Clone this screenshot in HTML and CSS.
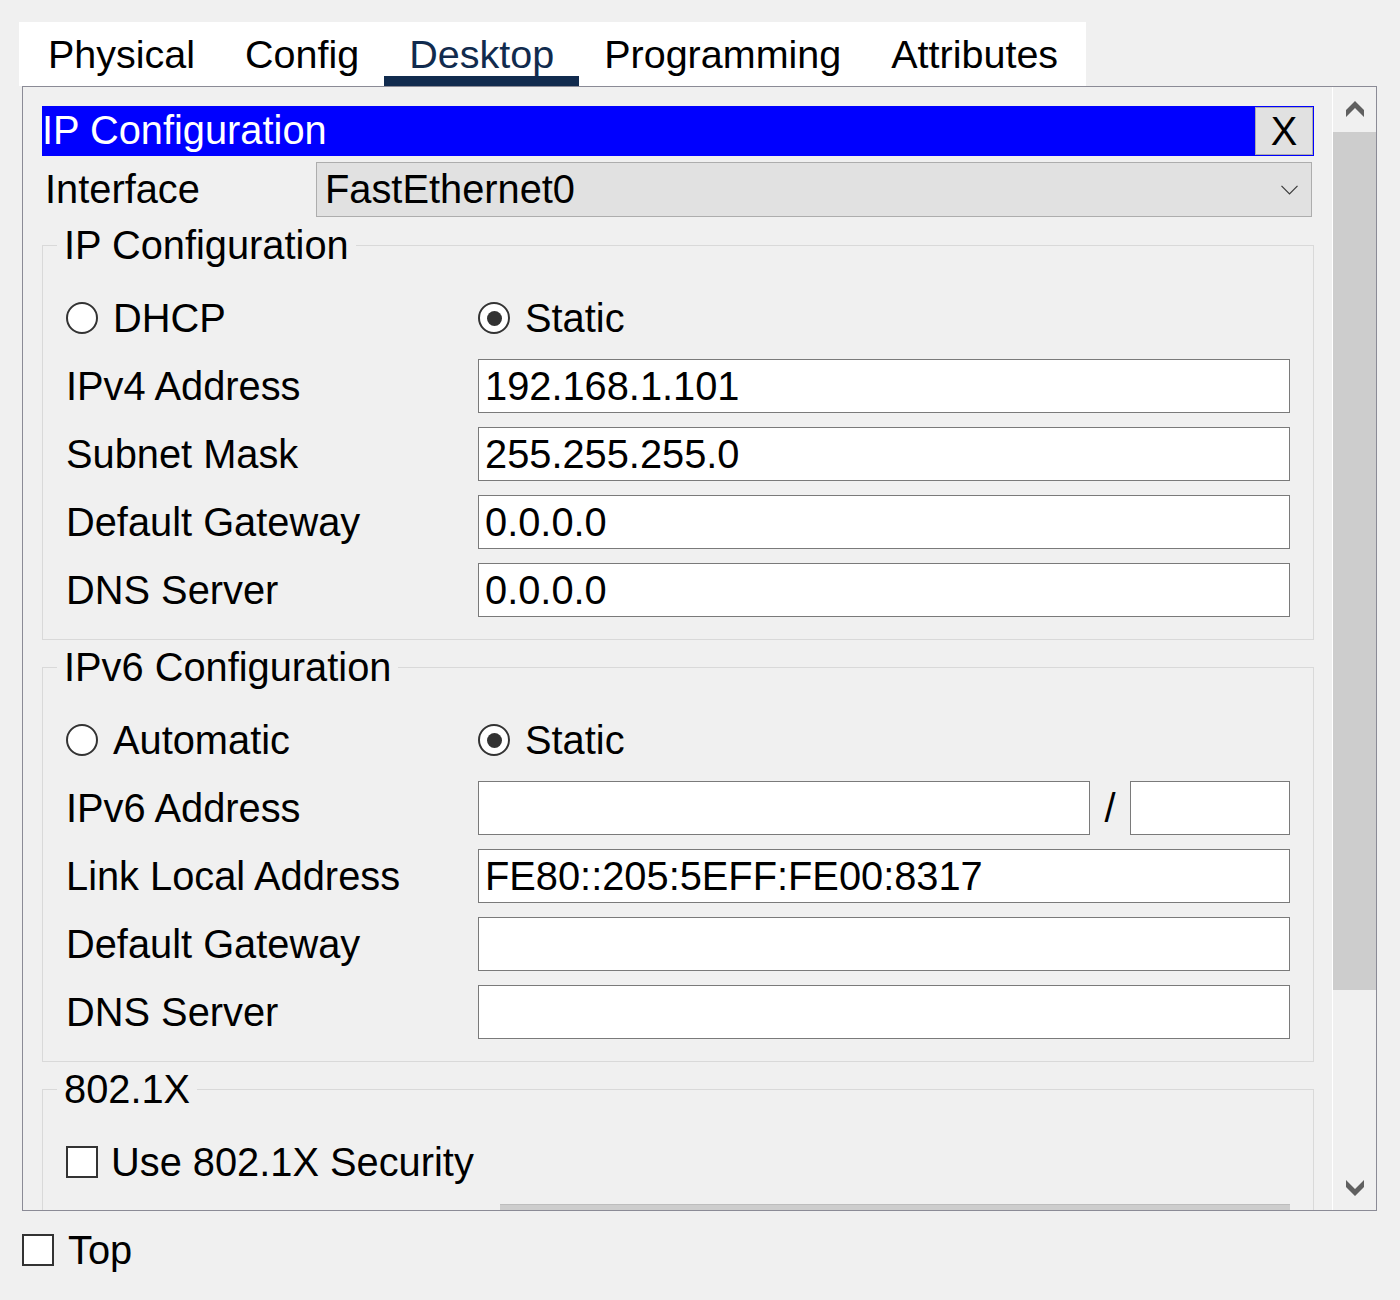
FILE: index.html
```html
<!DOCTYPE html>
<html>
<head>
<meta charset="utf-8">
<link rel="stylesheet" href="styles.css">
</head>
<body>
<div class="tabs">
  <div class="tab">Physical</div>
  <div class="tab">Config</div>
  <div class="tab active">Desktop</div>
  <div class="tab">Programming</div>
  <div class="tab">Attributes</div>
</div>
<div class="panel">
  <div class="scroll">
    <div class="content">
      <div class="titlebar">
        <span class="title">IP Configuration</span>
        <span class="close">X</span>
      </div>
      <div class="iface-row">
        <span class="iface-label">Interface</span>
        <div class="select">
          <span>FastEthernet0</span>
          <svg class="chev" width="17" height="10" viewBox="0 0 17 10"><polyline points="0.5,0.8 8.5,8.8 16.5,0.8" fill="none" stroke="#3a3a3a" stroke-width="1.2"/></svg>
        </div>
      </div>

      <fieldset class="group">
        <legend>IP Configuration</legend>
        <div class="row">
          <div class="col-label"><span class="radio"></span><span>DHCP</span></div>
          <div class="opt"><span class="radio checked"></span><span>Static</span></div>
        </div>
        <div class="row"><span class="col-label">IPv4 Address</span><input class="field" type="text" value="192.168.1.101"></div>
        <div class="row"><span class="col-label">Subnet Mask</span><input class="field" type="text" value="255.255.255.0"></div>
        <div class="row"><span class="col-label">Default Gateway</span><input class="field" type="text" value="0.0.0.0"></div>
        <div class="row"><span class="col-label">DNS Server</span><input class="field" type="text" value="0.0.0.0"></div>
      </fieldset>

      <fieldset class="group">
        <legend>IPv6 Configuration</legend>
        <div class="row">
          <div class="col-label"><span class="radio"></span><span>Automatic</span></div>
          <div class="opt"><span class="radio checked"></span><span>Static</span></div>
        </div>
        <div class="row">
          <span class="col-label">IPv6 Address</span>
          <input class="field addr" type="text" value="">
          <span class="slash">/</span>
          <input class="field prefix" type="text" value="">
        </div>
        <div class="row"><span class="col-label">Link Local Address</span><input class="field" type="text" value="FE80::205:5EFF:FE00:8317"></div>
        <div class="row"><span class="col-label">Default Gateway</span><input class="field" type="text" value=""></div>
        <div class="row"><span class="col-label">DNS Server</span><input class="field" type="text" value=""></div>
      </fieldset>

      <fieldset class="group last">
        <legend>802.1X</legend>
        <div class="row">
          <div class="col-label"><span class="check"></span><span>Use 802.1X Security</span></div>
        </div>
      </fieldset>
    </div>
    <div class="hthumb"></div>
  </div>
  <div class="vbar">
    <div class="arrow">
      <svg width="18" height="16" viewBox="0 0 18 16"><polygon points="9,0 18,9 18,16 9,7 0,16 0,9" fill="#606060"/></svg>
    </div>
    <div class="vthumb"></div>
    <div class="vspace"></div>
    <div class="arrow">
      <svg width="18" height="16" viewBox="0 0 18 16"><polygon points="0,0 9,9 18,0 18,7 9,16 0,7" fill="#606060"/></svg>
    </div>
  </div>
</div>
<div class="top-row"><span class="check"></span><span>Top</span></div>
</body>
</html>
```

FILE: styles.css
```css
body {
  margin: 0;
  background: #f0f0f0;
  font-family: "Liberation Sans", Arial, sans-serif;
  font-size: 39.8px;
  color: #000;
}

.tabs {
  display: flex;
  box-sizing: border-box;
  width: 1067px;
  height: 64px;
  margin: 22px 0 0 19px;
  padding-left: 4px;
  background: #fff;
  font-size: 39.5px;
}

.tab {
  padding: 10px 25px 0;
  line-height: 44px;
  border-bottom: 10px solid transparent;
  white-space: nowrap;
}

.tab.active {
  color: #112b4e;
  border-bottom-color: #112b4e;
}

.panel {
  display: flex;
  box-sizing: border-box;
  width: 1355px;
  height: 1125px;
  margin-left: 22px;
  border: 1px solid #8b8b96;
}

.scroll {
  position: relative;
  flex: 1;
  overflow: hidden;
}

.content {
  padding: 19px 18px 0 19px;
}

.titlebar {
  display: flex;
  justify-content: space-between;
  height: 50px;
  background: #0000ff;
  color: #fff;
  line-height: 49px;
}

.close {
  box-sizing: border-box;
  width: 58px;
  margin: 1px 1px 1px 0;
  background: #e1e1e1;
  border: 1px solid #adadad;
  color: #000;
  text-align: center;
  line-height: 46px;
}

.iface-row {
  display: flex;
  align-items: center;
  margin-top: 6px;
  padding-right: 2px;
}

.iface-label {
  width: 271px;
  padding-left: 3px;
  flex: none;
}

.select {
  flex: 1;
  display: flex;
  align-items: center;
  justify-content: space-between;
  box-sizing: border-box;
  height: 55px;
  padding: 0 13px 0 8px;
  background: #e1e1e1;
  border: 1px solid #adadad;
}

.chev {
  display: block;
}

.group {
  margin: 7px 0 0;
  padding: 24px 23px 22px 24px;
  border: 1px solid #d9d9d9;
  min-width: 0;
}

.group + .group {
  margin-top: 6px;
}

.group legend {
  margin-left: -10px;
  padding: 0 7px;
  line-height: 43px;
}

.group.last {
  padding-bottom: 80px;
}

.row {
  display: flex;
  align-items: center;
  height: 54px;
}

.row + .row {
  margin-top: 14px;
}

.col-label {
  display: flex;
  align-items: center;
  flex: none;
  width: 412px;
  margin-left: -1px;
  white-space: nowrap;
}

.opt {
  display: flex;
  align-items: center;
}

.radio {
  box-sizing: border-box;
  width: 32px;
  height: 32px;
  margin: 0 15px 0 0;
  border: 2.5px solid #333;
  border-radius: 50%;
  background: #fff;
  display: flex;
  align-items: center;
  justify-content: center;
}

.radio.checked::after {
  content: "";
  width: 15px;
  height: 15px;
  border-radius: 50%;
  background: #333;
}

.check {
  box-sizing: border-box;
  width: 32px;
  height: 32px;
  margin: 0 13px 0 0;
  border: 2px solid #333;
  background: #fff;
  flex: none;
}

.field {
  flex: 1;
  min-width: 0;
  box-sizing: border-box;
  height: 54px;
  margin: 0;
  padding: 0 6px;
  border: 1px solid #7a7a7a;
  background: #fff;
  font: inherit;
  color: #000;
  outline: none;
}

.field.addr {
  flex: none;
  width: 612px;
}

.slash {
  width: 40px;
  text-align: center;
  flex: none;
}

.field.prefix {
  flex: none;
  width: 160px;
}

.hthumb {
  position: absolute;
  left: 477px;
  bottom: 0;
  box-sizing: border-box;
  width: 790px;
  height: 6px;
  background: #cdcdcd;
  border-top: 1px solid #bdbdbd;
}

.vbar {
  display: flex;
  flex-direction: column;
  box-sizing: border-box;
  width: 44px;
  border-left: 1px solid #fff;
}

.arrow {
  display: flex;
  align-items: center;
  justify-content: center;
  height: 44px;
  flex: none;
}

.arrow svg {
  display: block;
}

.vthumb {
  height: 858px;
  margin-top: 1px;
  background: #cdcdcd;
  flex: none;
}

.vspace {
  flex: 1;
}

.top-row {
  display: flex;
  align-items: center;
  height: 54px;
  margin: 12px 0 0 22px;
}

.top-row .check {
  margin: 0 14px 0 0;
}
```
